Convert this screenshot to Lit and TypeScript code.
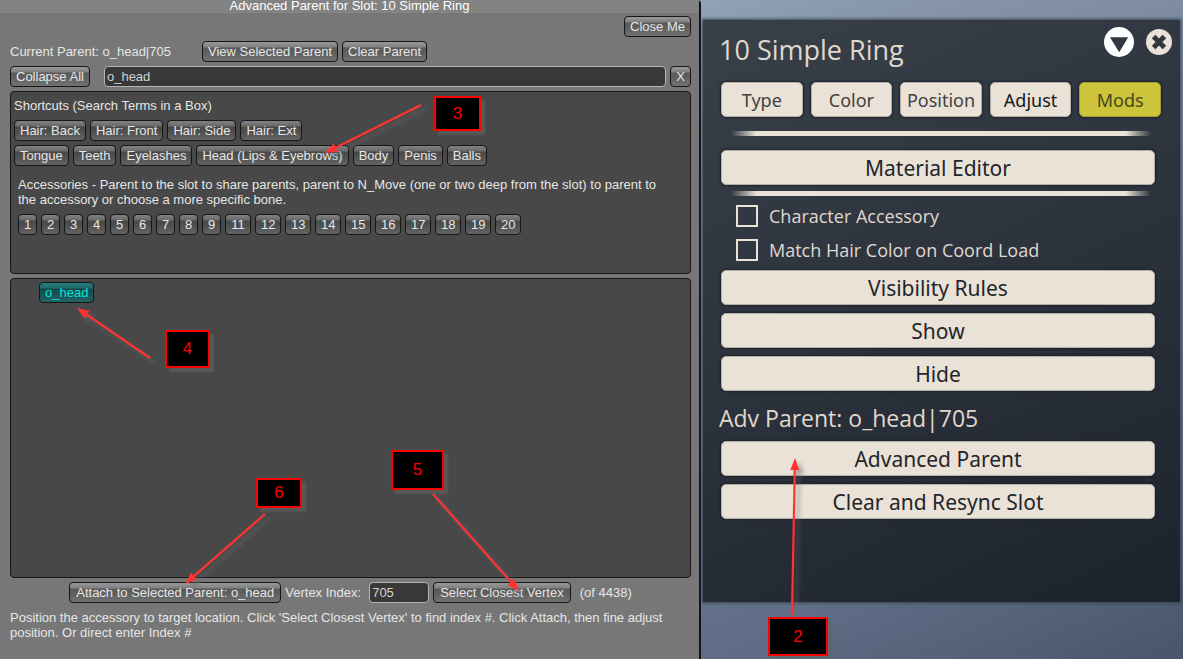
import { LitElement, html, css, svg } from "lit";
import { customElement, property } from "lit/decorators.js";
import { classMap } from "lit/directives/class-map.js";

const HAIR = ["Hair: Back", "Hair: Front", "Hair: Side", "Hair: Ext"];
const BODY = ["Tongue", "Teeth", "Eyelashes", "Head (Lips & Eyebrows)", "Body", "Penis", "Balls"];
const SLOTS = [1, 2, 3, 4, 5, 6, 7, 8, 9, 11, 12, 13, 14, 15, 16, 17, 18, 19, 20];

@customElement("parent-window")
class ParentWindow extends LitElement {
  static styles = css`
    :host {
      display: flex;
      flex-direction: column;
      box-sizing: border-box;
      min-width: 0;
      background: #777;
      border-right: 2px solid #141414;
      border-top-right-radius: 4px;
      font: 13px/15px "Liberation Sans", Arial, sans-serif;
      color: #e6e6e6;
    }
    .title {
      margin: 0;
      height: 13px;
      line-height: 12px;
      font-size: 13px;
      font-weight: 400;
      text-align: center;
      background: #838383;
      color: #fff;
    }
    .content {
      flex: 1;
      display: flex;
      flex-direction: column;
      gap: 4px;
      padding: 3px 8px 19px 10px;
    }
    .row {
      display: flex;
      align-items: center;
      gap: 4px;
      min-height: 21px;
    }
    .end { justify-content: flex-end; }
    .center { justify-content: center; }
    .wrap { flex-wrap: wrap; }
    .current { width: 188px; }
    button {
      box-sizing: border-box;
      height: 21px;
      padding: 0 5px;
      border: 1px solid #161616;
      border-radius: 4px;
      font: inherit;
      color: #e6e6e6;
      white-space: nowrap;
      background: linear-gradient(#999 0, #808080 5px, #5a5a5a 6px, #5e5e5e 10px, #727272 100%);
    }
    .center button { padding: 0 6px; }
    .box button {
      background: linear-gradient(#828282 0, #696969 5px, #494949 6px, #4e4e4e 10px, #646464 100%);
    }
    .box button.selected {
      color: #00e6dc;
      background: linear-gradient(#268080 0, #1f6b6b 5px, #174848 6px, #1a5050 10px, #216464 100%);
    }
    .slot { width: 19px; }
    .slot.wide { width: 26px; }
    input {
      box-sizing: border-box;
      height: 21px;
      min-width: 0;
      padding: 0 2px;
      border: 1px solid #b4b4b4;
      border-radius: 4px;
      background: #383838;
      color: #d2d2d2;
      font: inherit;
    }
    .search { flex: 1; margin-left: 10px; }
    .clear { width: 21px; }
    .vertex { width: 60px; }
    .vertex-label { margin-right: 4px; }
    .total { margin-left: 5px; }
    .box {
      background: #484848;
      border: 1px solid #161616;
      border-radius: 4px;
      display: flex;
      flex-direction: column;
      gap: 4px;
    }
    .shortcuts { padding: 6px 3px 38px; }
    .box h2 { margin: 0 0 3px; font: inherit; }
    .accessories {
      display: flex;
      flex-direction: column;
      gap: 7px;
      padding: 7px 18px 0 4px;
    }
    p { margin: 0; }
    .tree { flex: 1; padding: 3px 28px; }
    .help { padding-top: 3px; }
  `;

  render() {
    const shortcut = (name: string) => html`<button type="button">${name}</button>`;
    return html`
      <h1 class="title">Advanced Parent for Slot: 10 Simple Ring</h1>
      <div class="content">
        <div class="row end"><button type="button">Close Me</button></div>
        <div class="row">
          <span class="current">Current Parent: o_head|705</span>
          <button type="button">View Selected Parent</button>
          <button type="button">Clear Parent</button>
        </div>
        <div class="row">
          <button type="button">Collapse All</button>
          <input class="search" type="text" aria-label="Search bones" value="o_head" />
          <button class="clear" type="button">X</button>
        </div>
        <section class="box shortcuts">
          <h2>Shortcuts (Search Terms in a Box)</h2>
          <div class="row wrap">${HAIR.map(shortcut)}</div>
          <div class="row wrap">${BODY.map(shortcut)}</div>
          <div class="accessories">
            <p>Accessories - Parent to the slot to share parents, parent to N_Move (one or two deep from the slot) to parent to the accessory or choose a more specific bone.</p>
            <div class="row wrap">
              ${SLOTS.map((n) => html`<button type="button" class=${classMap({ slot: true, wide: n > 9 })}>${n}</button>`)}
            </div>
          </div>
        </section>
        <section class="box tree">
          <div class="row"><button class="selected" type="button">o_head</button></div>
        </section>
        <div class="row center">
          <button type="button">Attach to Selected Parent: o_head</button>
          <label class="vertex-label" for="vertex">Vertex Index:</label>
          <input class="vertex" id="vertex" type="text" value="705" />
          <button type="button">Select Closest Vertex</button>
          <span class="total">(of 4438)</span>
        </div>
        <p class="help">Position the accessory to target location. Click 'Select Closest Vertex' to find index #. Click Attach, then fine adjust position. Or direct enter Index #</p>
      </div>
    `;
  }
}

const TABS = ["Type", "Color", "Position", "Adjust", "Mods"];

@customElement("slot-panel")
class SlotPanel extends LitElement {
  static styles = css`
    :host {
      display: block;
      box-sizing: border-box;
      min-width: 0;
      padding: 20px 3px 57px 2px;
      background: linear-gradient(155deg, #91a1b6 0%, #8493a6 15%, #5f6e86 75%, #48556d 100%);
      font-family: "Open Sans", "Noto Sans", sans-serif;
      color: #e0d8ce;
    }
    .panel {
      box-sizing: border-box;
      height: 100%;
      padding: 7px 19px 0 16px;
      background: linear-gradient(155deg, #384048 0%, #2e353f 40%, #1d232c 100%);
      box-shadow: 0 0 3px 1px #39434f;
    }
    .head {
      display: flex;
      justify-content: space-between;
      height: 55px;
    }
    h1 {
      margin: 0;
      font-size: 27px;
      line-height: 46px;
      font-weight: 400;
    }
    .tools { display: flex; gap: 12px; align-items: center; height: 30px; margin-right: -11px; }
    .tools button { display: block; padding: 0; border: 0; background: none; }
    .tools svg { display: block; }
    .stack { display: flex; flex-direction: column; gap: 8px; margin: 0 6px 0 2px; }
    .tabs { display: grid; grid-template-columns: repeat(5, 1fr); gap: 8px; margin-left: 2px; }
    .tabs button, .stack button {
      height: 35px;
      padding: 0;
      border: 1px solid #b5aea7;
      border-radius: 5px;
      background: #eae1d7;
      font-family: "Noto Sans", "Open Sans", sans-serif;
      box-shadow: 0 0 2px 1px #1e242c;
    }
    .tabs button { font-size: 18px; color: #40423f; }
    .stack button { font-size: 21px; color: #22262a; }
    .tabs .strong { color: #14181c; }
    .tabs .active { background: #ccc43a; border-color: #a49e38; color: #46461f; }
    .line {
      height: 5px;
      margin: 14px 10px 0 12px;
      background: linear-gradient(90deg, transparent, #eae1d7 6%, #eae1d7 94%, transparent);
    }
    .first { margin-bottom: 14px; }
    .second { margin-top: 6px; }
    .checks { padding: 3px 0 3px 17px; }
    .checks label {
      display: flex;
      align-items: center;
      gap: 11px;
      height: 34px;
      font-size: 18px;
      font-weight: 500;
    }
    .checks input {
      appearance: none;
      box-sizing: border-box;
      width: 22px;
      height: 22px;
      margin: 0;
      border: 2px solid #eae1d7;
    }
    h2 {
      margin: 10px 0 6px;
      font-size: 23px;
      line-height: 34px;
      font-weight: 500;
    }
  `;

  render() {
    return html`
      <div class="panel">
        <div class="head">
          <h1>10 Simple Ring</h1>
          <div class="tools">
            <button type="button" aria-label="Minimize">
              <svg width="30" height="30" viewBox="0 0 30 30">
                <circle cx="15" cy="15" r="15" fill="#fff" />
                <path d="M6 10.2h18.2L15.2 25.2z" fill="#30373f" />
              </svg>
            </button>
            <button type="button" aria-label="Close">
              <svg width="26" height="26" viewBox="0 0 26 26">
                <circle cx="13" cy="13" r="13" fill="#eae1d7" />
                <path d="M7.6 7.6l10.8 10.8M18.4 7.6L7.6 18.4" stroke="#30373f" stroke-width="5" />
              </svg>
            </button>
          </div>
        </div>
        <div class="tabs">
          ${TABS.map((t) => html`<button type="button" class=${classMap({ strong: t === "Adjust", active: t === "Mods" })}>${t}</button>`)}
        </div>
        <div class="line first"></div>
        <div class="stack"><button type="button">Material Editor</button></div>
        <div class="line second"></div>
        <div class="checks">
          <label><input type="checkbox" />Character Accessory</label>
          <label><input type="checkbox" />Match Hair Color on Coord Load</label>
        </div>
        <div class="stack">
          <button type="button">Visibility Rules</button>
          <button type="button">Show</button>
          <button type="button">Hide</button>
        </div>
        <h2>Adv Parent: o_head|705</h2>
        <div class="stack">
          <button type="button">Advanced Parent</button>
          <button type="button">Clear and Resync Slot</button>
        </div>
      </div>
    `;
  }
}

interface Callout {
  n: number;
  box: [number, number, number, number];
  from: [number, number];
  to: [number, number];
}

const CALLOUTS: Callout[] = [
  { n: 3, box: [434, 96, 47, 35], from: [421, 105], to: [325, 153] },
  { n: 4, box: [165, 330, 45, 38], from: [150, 358], to: [77, 308] },
  { n: 5, box: [391, 450, 53, 40], from: [433, 494], to: [519, 591] },
  { n: 6, box: [256, 478, 46, 30], from: [265, 514], to: [185, 584] },
  { n: 2, box: [768, 617, 60, 39], from: [792, 615], to: [795, 458] },
];

@customElement("callout-layer")
class CalloutLayer extends LitElement {
  @property({ attribute: false }) items: Callout[] = [];

  static styles = css`
    :host { position: absolute; inset: 0; overflow: hidden; pointer-events: none; }
    .arrows {
      position: absolute;
      inset: 0;
      width: 100%;
      height: 100%;
      filter: drop-shadow(4px 4px 2px rgba(110, 110, 110, 0.6));
    }
    .number {
      position: absolute;
      box-sizing: border-box;
      display: flex;
      align-items: center;
      justify-content: center;
      border: 2px solid #f00;
      background: #000;
      color: #f00;
      font: 17px "Liberation Sans", Arial, sans-serif;
      box-shadow: 4px 4px 2px rgba(100, 100, 100, 0.6);
    }
  `;

  private arrow({ from, to }: Callout) {
    const dx = to[0] - from[0];
    const dy = to[1] - from[1];
    const len = Math.hypot(dx, dy);
    const angle = (Math.atan2(dy, dx) * 180) / Math.PI;
    return svg`<g transform="translate(${from[0]} ${from[1]}) rotate(${angle})" fill="#f33">
      <path d="M0 -1.1H${len - 10}V1.1H0z" /><path d="M${len} 0l-12 -4.5v9z" />
    </g>`;
  }

  render() {
    return html`
      <svg class="arrows" aria-hidden="true">${this.items.map((c) => this.arrow(c))}</svg>
      ${this.items.map(
        ({ n, box: [x, y, w, h] }) =>
          html`<div class="number" style="left:${x}px;top:${y}px;width:${w}px;height:${h}px">${n}</div>`
      )}
    `;
  }
}

@customElement("app-root")
class AppRoot extends LitElement {
  static styles = css`
    :host {
      position: relative;
      display: grid;
      grid-template-columns: 701fr 482fr;
      min-height: 100vh;
      background: #8796aa;
    }
  `;

  render() {
    return html`
      <parent-window></parent-window>
      <slot-panel></slot-panel>
      <callout-layer .items=${CALLOUTS}></callout-layer>
    `;
  }
}
